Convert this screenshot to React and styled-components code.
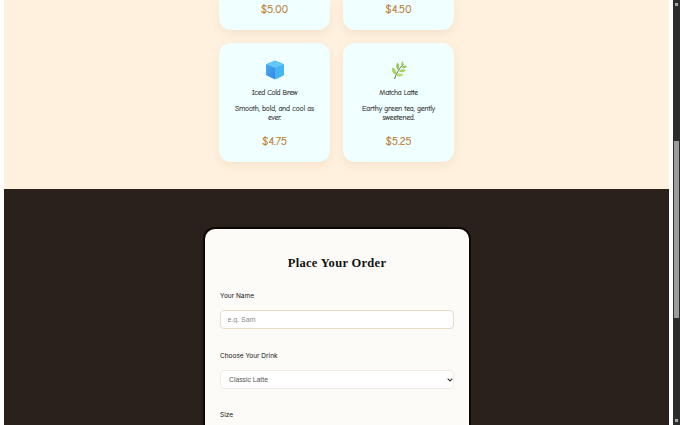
import React from 'react';
import styled, { createGlobalStyle } from 'styled-components';

const drinks = [
   [
      { id: 'a', price: '$5.00' },
      { id: 'b', price: '$4.50' },
   ],
   [
      { id: 'c', icon: 'cube', name: 'Iced Cold Brew', text: 'Smooth, bold, and cool as ever.', price: '$4.75' },
      { id: 'd', icon: 'leaf', name: 'Matcha Latte', text: 'Earthy green tea, gently sweetened.', price: '$5.25' },
   ],
];

function CubeIcon() {
   return (
      <svg width="20" height="20" viewBox="0 0 20 20">
         <defs>
            <linearGradient id="cubeFront" x1="0" y1="0" x2="1" y2="1">
               <stop offset="0" stopColor="#4aa6ee" />
               <stop offset="1" stopColor="#3a86e6" />
            </linearGradient>
         </defs>
         <path d="M10 1 18.500 4.500V15L10 19 1.500 15V4.500Z" fill="#45b4f2" stroke="#45b4f2" strokeWidth="1" strokeLinejoin="round" />
         <path d="M10 1 18.500 4.500 10 8 1.500 4.500Z" fill="#63c8f8" />
         <path d="M1.500 4.500 10 8V19L1.500 15Z" fill="url(#cubeFront)" />
      </svg>
   );
}

function LeafIcon() {
   return (
      <svg width="20" height="20" viewBox="0 0 20 20">
         <path d="M5.500 19C7 14 10 8.500 14.500 4" stroke="#6b7350" strokeWidth="1" fill="none" />
         <path d="M6.800 14.500C3.500 13.500 2.500 10.500 3.300 7.500 6 8.500 7.800 11.500 6.800 14.500Z" fill="#a6d05c" />
         <path d="M9 10C6.800 8.300 6.800 5 8.300 2.500 10.300 4.300 10.800 7.500 9 10Z" fill="#93c64e" />
         <path d="M12.500 6C11.700 4 12.300 2 14 1 14.800 2.800 14.300 5 12.500 6Z" fill="#a6d05c" />
         <path d="M7 15.500C8.500 13.300 11.700 13 14.500 14.700 12.300 16.700 9.300 17 7 15.500Z" fill="#b8dc6c" />
         <path d="M9.700 11.500C11.200 9.300 14.300 8.800 17 10 15.300 12.300 12.300 13 9.700 11.500Z" fill="#a6d05c" />
         <path d="M12.500 7.500C13.500 6 15.800 5.400 18 6.200 16.700 8.200 14.500 8.700 12.500 7.500Z" fill="#93c64e" />
      </svg>
   );
}

export default function App() {
   return (
      <Screen>
         <GlobalStyle />
         <Page>
            <MenuSection>
               {drinks.map((row, i) => (
                  <CardRow key={i}>
                     {row.map((drink) => (
                        <Card key={drink.id} $cut={i === 0}>
                           {drink.name && (
                              <>
                                 <IconBox>{drink.icon === 'cube' ? <CubeIcon /> : <LeafIcon />}</IconBox>
                                 <DrinkName>{drink.name}</DrinkName>
                                 <DrinkText>{drink.text}</DrinkText>
                              </>
                           )}
                           <Price>{drink.price}</Price>
                        </Card>
                     ))}
                  </CardRow>
               ))}
            </MenuSection>
            <OrderSection>
               <OrderCard>
                  <OrderTitle>Place Your Order</OrderTitle>
                  <Field>
                     <Label htmlFor="name">Your Name</Label>
                     <NameInput id="name" placeholder="e.g. Sam" />
                  </Field>
                  <Field>
                     <Label htmlFor="drink">Choose Your Drink</Label>
                     <SelectWrap>
                        <DrinkSelect id="drink" defaultValue="Classic Latte">
                           <option>Classic Latte</option>
                           <option>Iced Cold Brew</option>
                           <option>Matcha Latte</option>
                        </DrinkSelect>
                        <Chevron width="6" height="4" viewBox="0 0 6 4">
                           <path d="M0.700 0.700 3 3 5.300 0.700" fill="none" stroke="#333" strokeWidth="1.100" />
                        </Chevron>
                     </SelectWrap>
                  </Field>
                  <Field>
                     <Label as="div">Size</Label>
                  </Field>
               </OrderCard>
            </OrderSection>
         </Page>
         <Gutter />
         <ScrollTrack>
            <ScrollArrow />
            <ScrollThumb />
            <ScrollArrow $bottom />
         </ScrollTrack>
      </Screen>
   );
}

const GlobalStyle = createGlobalStyle`
   html, body {
      margin: 0;
      padding: 0;
      height: 100%;
      overflow: hidden;
      background: #fff;
   }
   * {
      box-sizing: border-box;
   }
`;

const Screen = styled.div`
   width: 680px;
   height: 425px;
   overflow: hidden;
   display: flex;
   background: #fff;
`;

const Page = styled.main`
   width: 665px;
   margin-left: 4px;
   flex: none;
   display: flex;
   flex-flow: column nowrap;
`;

const Gutter = styled.div`
   width: 4px;
   flex: none;
`;

const ScrollTrack = styled.div`
   width: 7px;
   flex: none;
   position: relative;
   background: #2c2c2c;
`;

const ScrollThumb = styled.div`
   position: absolute;
   top: 141px;
   left: 1px;
   width: 5px;
   height: 177px;
   background: #9c9c9c;
`;

const ScrollArrow = styled.div`
   position: absolute;
   left: 2px;
   width: 3px;
   height: 3px;
   background: #a8a8a8;
   ${({ $bottom }) => ($bottom ? 'bottom: 3px;' : 'top: 3px;')}
`;

const MenuSection = styled.section`
   height: 189px;
   flex: none;
   background: #fff1de;
   display: flex;
   flex-flow: column nowrap;
   align-items: center;
   gap: 13px;
`;

const CardRow = styled.div`
   display: flex;
   gap: 13px;
`;

const Card = styled.article`
   width: 111px;
   height: ${({ $cut }) => ($cut ? '30px' : '119px')};
   background: #f0ffff;
   border-radius: ${({ $cut }) => ($cut ? '0 0 12px 12px' : '12px')};
   box-shadow: 0 4px 10px rgba(120, 80, 30, 0.08);
   padding: ${({ $cut }) => ($cut ? '0' : '17px 12px 0')};
   display: flex;
   flex-flow: column nowrap;
   align-items: center;
   text-align: center;
   font-family: "Comic Sans MS", "Comic Neue", cursive;
   color: #222;
`;

const IconBox = styled.div`
   height: 20px;
   margin-bottom: 8px;
   display: flex;
`;

const DrinkName = styled.h3`
   margin: 0 0 6px;
   font-size: 7.600px;
   letter-spacing: -0.3px;
   line-height: 10px;
   font-weight: 400;
   -webkit-text-stroke: 0.1px #222;
`;

const DrinkText = styled.p`
   margin: 0;
   font-size: 7.500px;
   letter-spacing: -0.15px;
   line-height: 9px;
   flex: 1;
   -webkit-text-stroke: 0.1px #222;
`;

const Price = styled.div`
   margin-bottom: 13.500px;
   margin-top: auto;
   font-size: 11px;
   line-height: 14px;
   color: #b9772a;
   -webkit-text-stroke: 0.2px #b9772a;
`;

const OrderSection = styled.section`
   flex: 1;
   background: #2a211d;
   display: flex;
   justify-content: center;
   padding-top: 38px;
`;

const OrderCard = styled.form`
   width: 268px;
   height: 300px;
   flex: none;
   background: #fdfbf7;
   border: 2px solid #0c0806;
   border-radius: 12px;
   padding: 26px 14.500px 0 15.500px;
`;

const OrderTitle = styled.h2`
   margin: 0 0 21px;
   text-align: center;
   font-family: "Liberation Serif", serif;
   font-size: 12.500px;
   letter-spacing: 0.3px;
   line-height: 16px;
   font-weight: 700;
   color: #111;
`;

const Field = styled.div`
   margin-bottom: 22.500px;
`;

const Label = styled.label`
   display: block;
   margin-bottom: 10px;
   font-family: Inter, "Liberation Sans", sans-serif;
   font-size: 6.500px;
   line-height: 8px;
   font-weight: 400;
   color: #111;
`;

const NameInput = styled.input`
   display: block;
   width: 100%;
   height: 19px;
   padding: 0 6.500px;
   background: #fff;
   border: 1px solid #e4dcc4;
   border-radius: 4px;
   font-family: "Liberation Sans", sans-serif;
   font-size: 7px;
   outline: none;
   &::placeholder {
      color: #8a8a8a;
   }
`;

const SelectWrap = styled.div`
   position: relative;
`;

const DrinkSelect = styled.select`
   display: block;
   width: 100%;
   height: 19px;
   padding: 0 8px;
   appearance: none;
   background: #fff;
   border: 1px solid #f0ece4;
   border-radius: 4px;
   font-family: "Liberation Sans", sans-serif;
   font-size: 6.800px;
   color: #555;
`;

const Chevron = styled.svg`
   position: absolute;
   top: 8px;
   right: 1.500px;
   pointer-events: none;
`;
